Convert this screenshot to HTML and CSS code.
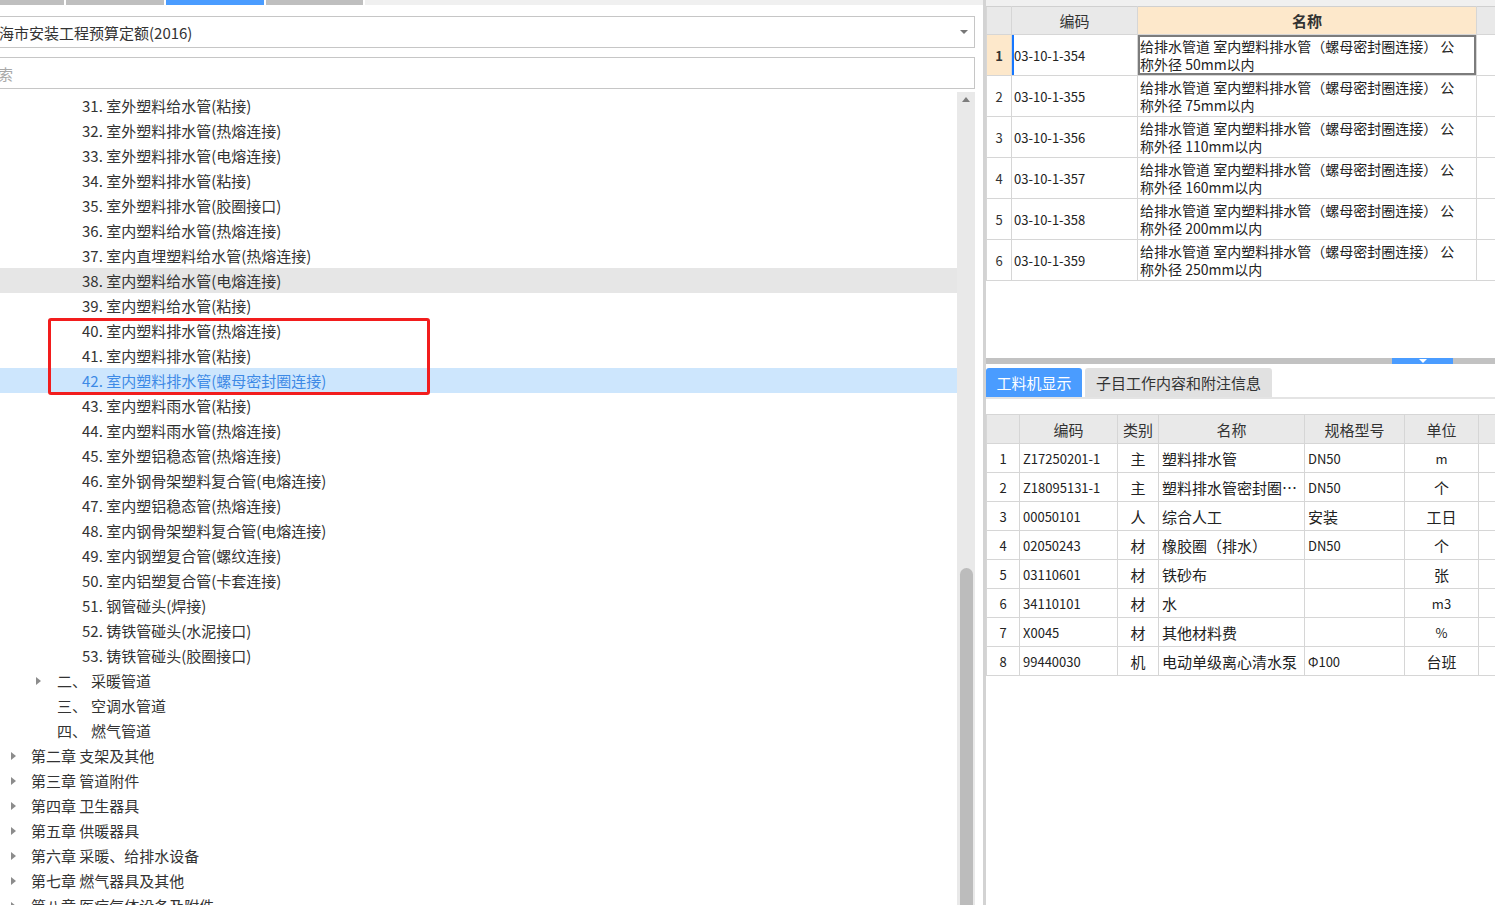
FILE: index.html
```html
<!DOCTYPE html>
<html lang="zh-CN">
<head>
<meta charset="utf-8">
<title>定额</title>
<link rel="stylesheet" href="styles.css">
</head>
<body>
<div class="app">
  <div class="left">
    <div class="tabstrip">
      <span class="seg s1"></span><span class="seg s2"></span><span class="seg s3 on"></span><span class="seg s4"></span><span class="seg rest"></span>
    </div>
    <div class="picker"><span class="picker-text">海市安装工程预算定额(2016)</span><span class="caret"></span></div>
    <div class="search"><span class="ph">索</span></div>
    <div class="treewrap">
      <div class="tree">
        <div class="row">31. 室外塑料给水管(粘接)</div>
        <div class="row">32. 室外塑料排水管(热熔连接)</div>
        <div class="row">33. 室外塑料排水管(电熔连接)</div>
        <div class="row">34. 室外塑料排水管(粘接)</div>
        <div class="row">35. 室外塑料排水管(胶圈接口)</div>
        <div class="row">36. 室内塑料给水管(热熔连接)</div>
        <div class="row">37. 室内直埋塑料给水管(热熔连接)</div>
        <div class="row hover">38. 室内塑料给水管(电熔连接)</div>
        <div class="row">39. 室内塑料给水管(粘接)</div>
        <div class="row">40. 室内塑料排水管(热熔连接)</div>
        <div class="row">41. 室内塑料排水管(粘接)</div>
        <div class="row sel">42. 室内塑料排水管(螺母密封圈连接)</div>
        <div class="row">43. 室内塑料雨水管(粘接)</div>
        <div class="row">44. 室内塑料雨水管(热熔连接)</div>
        <div class="row">45. 室外塑铝稳态管(热熔连接)</div>
        <div class="row">46. 室外钢骨架塑料复合管(电熔连接)</div>
        <div class="row">47. 室内塑铝稳态管(热熔连接)</div>
        <div class="row">48. 室内钢骨架塑料复合管(电熔连接)</div>
        <div class="row">49. 室内钢塑复合管(螺纹连接)</div>
        <div class="row">50. 室内铝塑复合管(卡套连接)</div>
        <div class="row">51. 钢管碰头(焊接)</div>
        <div class="row">52. 铸铁管碰头(水泥接口)</div>
        <div class="row">53. 铸铁管碰头(胶圈接口)</div>
        <div class="row l2 exp"><span class="tri"></span><span class="num">二、</span>采暖管道</div>
        <div class="row l2"><span class="num">三、</span>空调水管道</div>
        <div class="row l2"><span class="num">四、</span>燃气管道</div>
        <div class="row l1"><span class="tri"></span>第二章 支架及其他</div>
        <div class="row l1"><span class="tri"></span>第三章 管道附件</div>
        <div class="row l1"><span class="tri"></span>第四章 卫生器具</div>
        <div class="row l1"><span class="tri"></span>第五章 供暖器具</div>
        <div class="row l1"><span class="tri"></span>第六章 采暖、给排水设备</div>
        <div class="row l1"><span class="tri"></span>第七章 燃气器具及其他</div>
        <div class="row l1"><span class="tri"></span>第八章 医疗气体设备及附件</div>
        <div class="mark"></div>
      </div>
      <div class="vscroll"><span class="up"></span><span class="thumb"></span></div>
    </div>
  </div>

  <div class="right">
    <div class="rtop"></div>
    <div class="toparea">
      <table class="t1">
        <colgroup><col class="c-n"><col class="c-code"><col class="c-name"><col class="c-x"></colgroup>
        <thead>
          <tr><th></th><th>编码</th><th class="hl">名称</th><th></th></tr>
        </thead>
        <tbody>
          <tr class="cur"><td class="n">1</td><td class="code">03-10-1-354</td><td class="name">给排水管道 室内塑料排水管（螺母密封圈连接） 公<br>称外径 50mm以内</td><td></td></tr>
          <tr><td class="n">2</td><td class="code">03-10-1-355</td><td class="name">给排水管道 室内塑料排水管（螺母密封圈连接） 公<br>称外径 75mm以内</td><td></td></tr>
          <tr><td class="n">3</td><td class="code">03-10-1-356</td><td class="name">给排水管道 室内塑料排水管（螺母密封圈连接） 公<br>称外径 110mm以内</td><td></td></tr>
          <tr><td class="n">4</td><td class="code">03-10-1-357</td><td class="name">给排水管道 室内塑料排水管（螺母密封圈连接） 公<br>称外径 160mm以内</td><td></td></tr>
          <tr><td class="n">5</td><td class="code">03-10-1-358</td><td class="name">给排水管道 室内塑料排水管（螺母密封圈连接） 公<br>称外径 200mm以内</td><td></td></tr>
          <tr><td class="n">6</td><td class="code">03-10-1-359</td><td class="name">给排水管道 室内塑料排水管（螺母密封圈连接） 公<br>称外径 250mm以内</td><td></td></tr>
        </tbody>
      </table>
    </div>
    <div class="split"><span class="handle"></span></div>
    <div class="tabs">
      <span class="tab on">工料机显示</span>
      <span class="tab">子目工作内容和附注信息</span>
    </div>
    <div class="bottom">
      <table class="t2">
        <colgroup><col class="d-n"><col class="d-code"><col class="d-type"><col class="d-name"><col class="d-spec"><col class="d-unit"><col class="d-x"></colgroup>
        <thead>
          <tr><th></th><th>编码</th><th>类别</th><th>名称</th><th>规格型号</th><th>单位</th><th></th></tr>
        </thead>
        <tbody>
          <tr><td class="n">1</td><td class="code">Z17250201-1</td><td class="c">主</td><td>塑料排水管</td><td class="sm">DN50</td><td class="c sm">m</td><td></td></tr>
          <tr><td class="n">2</td><td class="code">Z18095131-1</td><td class="c">主</td><td>塑料排水管密封圈…</td><td class="sm">DN50</td><td class="c">个</td><td></td></tr>
          <tr><td class="n">3</td><td class="code">00050101</td><td class="c">人</td><td>综合人工</td><td>安装</td><td class="c">工日</td><td></td></tr>
          <tr><td class="n">4</td><td class="code">02050243</td><td class="c">材</td><td>橡胶圈（排水）</td><td class="sm">DN50</td><td class="c">个</td><td></td></tr>
          <tr><td class="n">5</td><td class="code">03110601</td><td class="c">材</td><td>铁砂布</td><td></td><td class="c">张</td><td></td></tr>
          <tr><td class="n">6</td><td class="code">34110101</td><td class="c">材</td><td>水</td><td></td><td class="c sm">m3</td><td></td></tr>
          <tr><td class="n">7</td><td class="code">X0045</td><td class="c">材</td><td>其他材料费</td><td></td><td class="c sm">%</td><td></td></tr>
          <tr><td class="n">8</td><td class="code">99440030</td><td class="c">机</td><td>电动单级离心清水泵</td><td class="sm">Φ100</td><td class="c">台班</td><td></td></tr>
        </tbody>
      </table>
    </div>
  </div>
</div>
</body>
</html>
```
FILE: styles.css
```css
* { box-sizing: border-box; margin: 0; padding: 0; }
html, body { width: 1495px; height: 905px; overflow: hidden; background: #fff; }
body { font-family: "Noto Sans CJK SC", "Microsoft YaHei", sans-serif; color: #333; }

.app { display: flex; height: 905px; }

/* ---------- left panel ---------- */
.left { width: 983px; flex: none; display: flex; flex-direction: column; }

.tabstrip { display: flex; height: 5px; gap: 2px; }
.seg { height: 5px; background: #bfbfbf; flex: none; }
.s1 { width: 64px; }
.s2 { width: 98px; }
.s3 { width: 98px; }
.s4 { width: 97px; }
.seg.on { background: #4a9cff; }
.seg.rest { flex: 1; background: #f0f0f0; }

.picker {
  margin: 11px 8px 0 0; height: 32px;
  border: 1px solid #c6c6c6; border-left: none;
  display: flex; align-items: center; justify-content: space-between;
  font-size: 15px; color: #333; padding-right: 6px;
}
.picker-text { margin-left: -1px; }
.caret { width: 0; height: 0; border-left: 4px solid transparent; border-right: 4px solid transparent; border-top: 4px solid #777; }

.search {
  margin: 9px 8px 0 0; height: 32px;
  border: 1px solid #c6c6c6; border-left: none;
  display: flex; align-items: center; font-size: 15px;
}
.ph { color: #a8a8a8; margin-left: -2px; }

.treewrap { margin: 3px 8px 0 0; flex: 1; display: flex; overflow: hidden; }
.tree { width: 957px; flex: none; padding-top: 1px; position: relative; }
.row {
  height: 25px; line-height: 25px; font-size: 15px; color: #333;
  white-space: nowrap; padding-left: 82px; display: flex; align-items: center;
}
.row.hover { background: #e6e6e6; }
.row.sel { background: #cde6fd; color: #3d8ae6; }
.row.l2 { padding-left: 57px; }
.row.l2.exp { padding-left: 36px; }
.row.l2.exp .tri { margin-right: 16px; }
.row.l1 { padding-left: 11px; }
.row.l1 .tri { margin-right: 15px; }
.num { width: 34px; flex: none; }
.tri {
  width: 0; height: 0; flex: none;
  border-left: 5px solid #8c8c8c; border-top: 4px solid transparent; border-bottom: 4px solid transparent;
}
.mark {
  position: absolute; left: 48px; top: 226px; width: 382px; height: 77px;
  border: 3px solid #f21d1d; border-radius: 3px;
}

.vscroll { width: 18px; flex: none; background: #e9e9e9; display: flex; flex-direction: column; align-items: center; }
.up { margin-top: 5px; width: 0; height: 0; border-left: 4px solid transparent; border-right: 4px solid transparent; border-bottom: 5px solid #7d7d7d; }
.thumb { margin-top: 466px; width: 13px; flex: 1; background: #bcbcbc; border-radius: 7px 7px 0 0; }

/* ---------- right panel ---------- */
.right { flex: 1; border-left: 3px solid #d3d3d3; display: flex; flex-direction: column; min-width: 0; }
.rtop { height: 6px; background: #f0f0f0; flex: none; }
.toparea { height: 352px; flex: none; overflow: hidden; }

table { border-collapse: collapse; table-layout: fixed; width: 509px; }
th, td { border: 1px solid #d6d6d6; overflow: hidden; white-space: nowrap; }
th { background: #e9e9e9; font-weight: normal; font-size: 15px; color: #333; text-align: center; }

.c-n { width: 25px; } .c-code { width: 126px; } .c-name { width: 339px; } .c-x { width: 19px; }
.t1 th { height: 28px; border-top-color: #d0d0d0; }
.t1 th.hl { background: #fde8cb; font-weight: bold; }
.t1 td { height: 41px; font-size: 14px; color: #222; vertical-align: middle; }
.t1 td.n { text-align: center; font-size: 13px; color: #333; }
.t1 td.code { padding-left: 2px; font-size: 13px; }
.t1 td.name { padding-left: 2px; line-height: 18px; white-space: nowrap; }
.t1 tr.cur td.n { background: #fde8cb; font-weight: bold; }
.t1 tr.cur td.code { box-shadow: inset 2px 0 0 #1677ff; }
.t1 tr.cur td.name { box-shadow: inset 0 0 0 2px #7c7c7c; }

.split { height: 6px; flex: none; background: #c2c2c2; display: flex; }
.handle { margin-left: 406px; width: 61px; background: #4a9cff; display: flex; justify-content: center; }
.handle::after { content: ""; margin-top: 1px; width: 0; height: 0; border-left: 4px solid transparent; border-right: 4px solid transparent; border-top: 4px solid #fff; }

.tabs { margin-top: 4px; height: 31px; flex: none; display: flex; gap: 3px; border-bottom: 2px solid #e4e4e4; }
.tab { height: 29px; display: flex; align-items: center; justify-content: center; font-size: 15px; background: #e1e1e1; color: #333; border-radius: 3px 3px 0 0; width: 187px; }
.tab.on { background: #4a9cff; color: #fff; width: 96px; }

.bottom { padding-top: 15px; flex: 1; }
.d-n { width: 33px; } .d-code { width: 98px; } .d-type { width: 41px; } .d-name { width: 146px; }
.d-spec { width: 100px; } .d-unit { width: 74px; } .d-x { width: 17px; }
.t2 th { height: 29px; }
.t2 td { height: 29px; font-size: 15px; color: #222; padding-left: 3px; }
.t2 td.n { text-align: center; font-size: 13px; padding-left: 0; }
.t2 td.code { font-size: 13px; padding-left: 3px; }
.t2 td.c { text-align: center; padding-left: 0; }
.t2 td.sm { font-size: 13px; }
```
